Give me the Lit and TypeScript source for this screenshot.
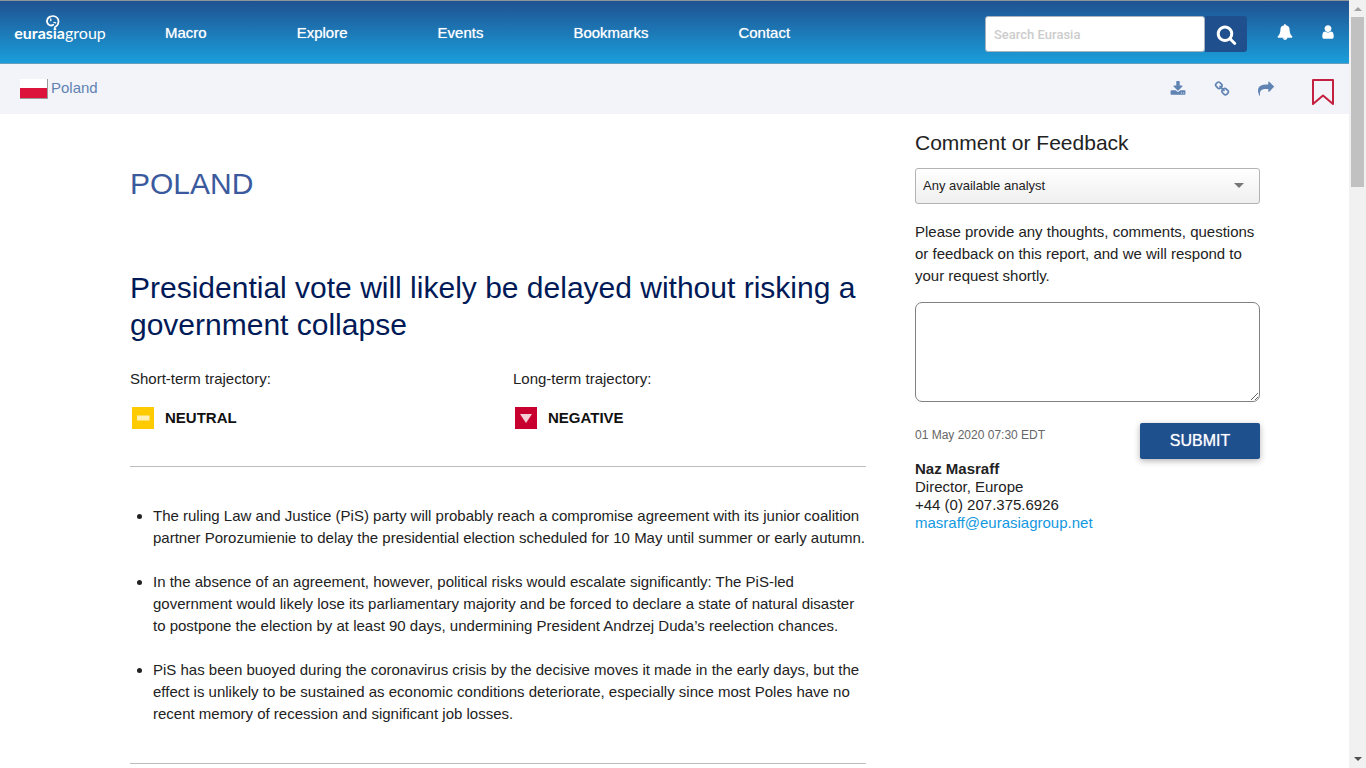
import { LitElement, html, css, svg } from "lit";
import { customElement } from "lit/decorators.js";

const ICONS = {
  search:
    "M1216 832q0-185-131.5-316.5t-316.5-131.5-316.5 131.5-131.5 316.5 131.5 316.5 316.5 131.5 316.5-131.5 131.5-316.5zm512 832q0 52-38 90t-90 38q-54 0-90-38l-343-342q-179 124-399 124-143 0-273.5-55.5t-225-150-150-225-55.5-273.5 55.5-273.5 150-225 225-150 273.5-55.5 273.5 55.5 225 150 150 225 55.5 273.5q0 220-124 399l343 343q37 37 37 90z",
  bell:
    "M912 1696q0-16-16-16-59 0-101.5-42.5t-42.5-101.5q0-16-16-16t-16 16q0 73 51.5 124.5t124.5 51.5q16 0 16-16zm816-288q0 52-38 90t-90 38h-448q0 106-75 181t-181 75-181-75-75-181h-448q-52 0-90-38t-38-90q50-42 91-88t85-119.5 74.5-158.5 50-206 19.5-260q0-152 117-282.5t307-158.5q-8-19-8-39 0-40 28-68t68-28 68 28 28 68q0 20-8 39 190 28 307 158.5t117 282.5q0 139 19.5 260t50 206 74.5 158.5 85 119.5 91 88z",
  user:
    "M1536 1399q0 109-62.5 187t-150.5 78h-854q-88 0-150.5-78t-62.5-187q0-85 8.5-160.5t31.5-152 58.5-131 94-89 134.5-34.5q131 128 313 128t313-128q76 0 134.5 34.5t94 89 58.5 131 31.5 152 8.5 160.5zm-256-887q0 159-112.5 271.5t-271.5 112.5-271.5-112.5-112.5-271.5 112.5-271.5 271.5-112.5 271.5 112.5 112.5 271.5z",
  download:
    "M1344 1344q0-26-19-45t-45-19-45 19-19 45 19 45 45 19 45-19 19-45zm256 0q0-26-19-45t-45-19-45 19-19 45 19 45 45 19 45-19 19-45zm128-224v320q0 40-28 68t-68 28h-1472q-40 0-68-28t-28-68v-320q0-40 28-68t68-28h465l135 136q58 56 136 56t136-56l136-136h464q40 0 68 28t28 68zm-325-569q17 41-14 70l-448 448q-18 19-45 19t-45-19l-448-448q-31-29-14-70 17-39 59-39h256v-448q0-26 19-45t45-19h256q26 0 45 19t19 45v448h256q42 0 59 39z",
  link:
    "M1520 1216q0-40-28-68l-208-208q-28-28-68-28-42 0-72 32 3 3 19 18.5t21.5 21.5 15 19 13 25.5 3.5 27.5q0 40-28 68t-68 28q-15 0-27.5-3.5t-25.5-13-19-15-21.5-21.5-18.5-19q-33 31-33 73 0 40 28 68l206 207q27 27 68 27 40 0 68-26l147-146q28-28 28-67zm-703-705q0-40-28-68l-206-207q-28-28-68-28-39 0-68 27l-147 146q-28 28-28 67 0 40 28 68l208 208q27 27 68 27 42 0 72-31-3-3-19-18.5t-21.5-21.5-15-19-13-25.5-3.5-27.5q0-40 28-68t68-28q15 0 27.5 3.5t25.5 13 19 15 21.5 21.5 18.5 19q33-31 33-73zm895 705q0 120-85 203l-147 146q-83 83-203 83-121 0-204-85l-206-207q-83-83-83-203 0-123 88-209l-88-88q-86 88-208 88-120 0-204-84l-208-208q-84-84-84-204t85-203l147-146q83-83 203-83 121 0 204 85l206 207q83 83 83 203 0 123-88 209l88 88q86-88 208-88 120 0 204 84l208 208q84 84 84 204z",
  share:
    "M1792 640q0 26-19 45l-512 512q-19 19-45 19t-45-19-19-45v-256h-224q-98 0-175.5 6t-154 21.5-133 42.5-105.5 69.5-80 101-48.5 138.5-17.5 181q0 55 5 123 0 6 2.5 23.5t2.5 26.5q0 15-8.5 25t-23.5 10q-16 0-28-17-7-9-13-22t-13.5-30-10.5-24q-127-285-127-451 0-199 53-333 162-403 875-403h224v-256q0-26 19-45t45-19 45 19l512 512q19 19 19 45z",
};

const icon = (name: keyof typeof ICONS, size: number) => html`
  <svg width=${size} height=${size} viewBox="0 0 1792 1792" fill="currentColor" aria-hidden="true">
    ${svg`<path d=${ICONS[name]}></path>`}
  </svg>
`;

const NAV = ["Macro", "Explore", "Events", "Bookmarks", "Contact"];

const POINTS = [
  "The ruling Law and Justice (PiS) party will probably reach a compromise agreement with its junior coalition partner Porozumienie to delay the presidential election scheduled for 10 May until summer or early autumn.",
  "In the absence of an agreement, however, political risks would escalate significantly: The PiS-led government would likely lose its parliamentary majority and be forced to declare a state of natural disaster to postpone the election by at least 90 days, undermining President Andrzej Duda’s reelection chances.",
  "PiS has been buoyed during the coronavirus crisis by the decisive moves it made in the early days, but the effect is unlikely to be sustained as economic conditions deteriorate, especially since most Poles have no recent memory of recession and significant job losses.",
];

const base = css`
  *,
  *::before,
  *::after {
    box-sizing: border-box;
  }
  svg {
    display: block;
  }
  a {
    color: inherit;
    text-decoration: none;
  }
  button {
    padding: 0;
    border: 0;
    background: none;
    color: inherit;
    font: inherit;
    cursor: pointer;
  }
`;

@customElement("site-header")
export class SiteHeader extends LitElement {
  static styles = [
    base,
    css`
      :host {
        display: flex;
        align-items: center;
        height: 64px;
        padding: 0 13px 0 15px;
        border-top: 1px solid #8d959d;
        border-bottom: 1px solid #6b9cb9;
        background: linear-gradient(#205291, #1a9edb);
        color: #fff;
      }
      .logo {
        display: flex;
        flex-direction: column;
        align-items: center;
        width: 90px;
        margin-bottom: 8px;
        font: 16px/18px Lato, sans-serif;
      }
      .logo svg {
        margin: 0 14px -5px 0;
      }
      .logo b {
        font-weight: 700;
      }
      nav {
        display: flex;
        flex: 1;
        gap: 90px;
        margin: 2px 0 0 60px;
        font-size: 15px;
        line-height: 20px;
        text-shadow: 0 0 1px rgba(255, 255, 255, 0.7);
      }
      form {
        display: flex;
        margin: 4px 30px 0 0;
      }
      input {
        width: 220px;
        height: 36px;
        padding: 0 8px;
        border: 1px solid #a9b3bd;
        border-radius: 3px;
        background: #fff;
        font: 500 13px Roboto, sans-serif;
      }
      input::placeholder {
        color: #ccc;
        opacity: 1;
      }
      .go {
        display: grid;
        place-items: center;
        width: 42px;
        height: 36px;
        border-radius: 0 3px 3px 0;
        background: #1f4f8c;
      }
      .actions {
        display: flex;
        gap: 27px;
      }
    `,
  ];

  render() {
    return html`
      <a class="logo" href="#" aria-label="Eurasia Group home">
        <svg width="14" height="14" viewBox="0 0 14 14" fill="none" stroke="#fff" stroke-linecap="round" aria-hidden="true">
          <path d="M3.600 1.800C.6 3.400.2 7.600 2.400 9.400c1.400 1.200 3.400 1.300 4.800.4" stroke-width="1.900"></path>
          <path d="M4.600 1.500c3.600-1.500 8 .8 7.900 5-.1 2.600-1.500 4.600-3.700 5.700" stroke-width="1.700"></path>
          <path d="M4.800 3.800v2M8 7.400l1.600.4" stroke-width="1.300"></path>
        </svg>
        <span><b>eurasia</b>group</span>
      </a>
      <nav>${NAV.map((n) => html`<a href="#">${n}</a>`)}</nav>
      <form @submit=${(e: Event) => e.preventDefault()}>
        <input type="text" placeholder="Search Eurasia" aria-label="Search Eurasia" />
        <button class="go" aria-label="Search">${icon("search", 21)}</button>
      </form>
      <div class="actions">
        <button aria-label="Notifications">${icon("bell", 16)}</button>
        <button aria-label="Account">${icon("user", 16)}</button>
      </div>
    `;
  }
}

@customElement("country-bar")
export class CountryBar extends LitElement {
  static styles = [
    base,
    css`
      :host {
        display: flex;
        align-items: center;
        justify-content: space-between;
        height: 50px;
        padding: 0 15px 0 20px;
        background: #f3f4f9;
        color: #5f83b3;
      }
      .country {
        display: flex;
        gap: 3px;
        font-size: 15px;
        line-height: 18px;
      }
      .flag {
        width: 28px;
        height: 20px;
        border: solid #9a9a9a;
        border-width: 0 1px 1px 0;
        background: linear-gradient(#fff 50%, #dc143c 50%);
      }
      .tools {
        display: flex;
        align-items: center;
        gap: 28px;
      }
      .mark {
        margin: 6px 0 0 10px;
      }
    `,
  ];

  render() {
    return html`
      <a class="country" href="#"><span class="flag"></span>Poland</a>
      <div class="tools">
        <button aria-label="Download">${icon("download", 16)}</button>
        <button aria-label="Copy link">${icon("link", 16)}</button>
        <button aria-label="Share">${icon("share", 16)}</button>
        <button class="mark" aria-label="Bookmark">
          <svg width="22" height="26" viewBox="0 0 22 26" fill="none" stroke="#c4203f" stroke-width="2" stroke-linejoin="round">
            <path d="M1 1h20v24L11 16.500 1 25z"></path>
          </svg>
        </button>
      </div>
    `;
  }
}

@customElement("report-article")
export class ReportArticle extends LitElement {
  static styles = [
    base,
    css`
      :host {
        display: block;
        padding-top: 51px;
      }
      h1,
      h2 {
        margin: 0;
        font-size: 30px;
        font-weight: 400;
        line-height: 37px;
      }
      h2 {
        color: #3b5a9d;
      }
      h1 {
        margin-top: 67px;
        color: #001a57;
      }
      .trajectories {
        display: grid;
        grid-template-columns: 1fr 1fr;
        gap: 30px;
        margin-top: 25px;
        line-height: 22px;
      }
      .verdict {
        display: flex;
        align-items: center;
        gap: 11px;
        margin-top: 17px;
        padding-left: 2px;
        color: #111;
        font-weight: 700;
      }
      hr {
        height: 1px;
        margin: 37px 0 0;
        border: 0;
        background: #bcbcbc;
      }
      ul {
        display: grid;
        gap: 22px;
        margin: 38px 0 0;
        padding: 0 0 0 23px;
        line-height: 22px;
      }
      .end {
        margin-top: 38px;
      }
    `,
  ];

  render() {
    return html`
      <h2>POLAND</h2>
      <h1>Presidential vote will likely be delayed without risking a government collapse</h1>
      <div class="trajectories">
        <div>
          Short-term trajectory:
          <div class="verdict">
            <svg width="22" height="22" viewBox="0 0 22 22" aria-hidden="true">
              <path fill="#fecb00" d="M0 0h22v22H0z"></path>
              <path fill="#fff0b8" d="M5 8.500h12.500v5H5z"></path>
            </svg>
            NEUTRAL
          </div>
        </div>
        <div>
          Long-term trajectory:
          <div class="verdict">
            <svg width="22" height="22" viewBox="0 0 22 22" aria-hidden="true">
              <path fill="#c8002f" d="M0 0h22v22H0z"></path>
              <path fill="#f4cdd6" d="M5 7h12l-6 9z"></path>
            </svg>
            NEGATIVE
          </div>
        </div>
      </div>
      <hr />
      <ul>
        ${POINTS.map((p) => html`<li>${p}</li>`)}
      </ul>
      <hr class="end" />
    `;
  }
}

@customElement("feedback-panel")
export class FeedbackPanel extends LitElement {
  static styles = [
    base,
    css`
      :host {
        display: block;
        padding-top: 16px;
      }
      h3 {
        margin: 0 0 12px;
        font-size: 21px;
        font-weight: 400;
        line-height: 26px;
      }
      .pick {
        position: relative;
        display: block;
      }
      select {
        display: block;
        width: 100%;
        height: 36px;
        padding: 0 8px 2px 7px;
        border: 1px solid #b3b3b3;
        border-radius: 3px;
        appearance: none;
        background: linear-gradient(#fff, #efefef);
        color: #222;
        font: 13px "Liberation Sans", Arial, sans-serif;
      }
      .arrow {
        position: absolute;
        top: 15px;
        right: 16px;
        border: solid transparent;
        border-width: 5px 5px 0;
        border-top-color: #777;
      }
      .prompt {
        display: block;
        margin-top: 17px;
        line-height: 22px;
      }
      textarea {
        display: block;
        width: 100%;
        height: 100px;
        margin-top: 15px;
        border: 1px solid #808080;
        border-radius: 7px;
        background: #fff;
        font: inherit;
      }
      .row {
        display: flex;
        justify-content: space-between;
        margin-top: 21px;
      }
      time {
        display: block;
        margin: 4px 0 17px;
        color: #666;
        font-size: 12px;
        line-height: 16px;
      }
      address {
        font-style: normal;
        line-height: 18px;
      }
      .mail {
        color: #1298e0;
      }
      .submit {
        width: 120px;
        height: 36px;
        border-radius: 2px;
        background: #1f508e;
        box-shadow: 0 2px 6px rgba(0, 0, 0, 0.3);
        color: #fff;
        font-size: 16px;
        text-shadow: 0 0 1px rgba(255, 255, 255, 0.7);
      }
    `,
  ];

  render() {
    return html`
      <h3>Comment or Feedback</h3>
      <div class="pick">
        <select aria-label="Analyst">
          <option>Any available analyst</option>
        </select>
        <span class="arrow"></span>
      </div>
      <label class="prompt" for="comment">
        Please provide any thoughts, comments, questions or feedback on this report, and we will respond to your
        request shortly.
      </label>
      <textarea id="comment"></textarea>
      <div class="row">
        <div>
          <time datetime="2020-05-01T07:30-04:00">01 May 2020 07:30 EDT</time>
          <address>
            <b>Naz Masraff</b><br />
            Director, Europe<br />
            +44 (0) 207.375.6926<br />
            <a class="mail" href="mailto:masraff@eurasiagroup.net">masraff@eurasiagroup.net</a>
          </address>
        </div>
        <button class="submit">SUBMIT</button>
      </div>
    `;
  }
}

@customElement("app-root")
export class AppRoot extends LitElement {
  static styles = [
    base,
    css`
      :host {
        display: grid;
        grid-template-columns: minmax(0, 1fr) 17px;
        height: 100vh;
        overflow: hidden;
        background: #fff;
        color: #222;
        font: 15px/22px "Liberation Sans", Arial, sans-serif;
      }
      .page {
        min-width: 0;
        overflow: hidden;
      }
      .content {
        display: grid;
        grid-template-columns: minmax(0, 1fr) 345px;
        gap: 49px;
        padding: 0 89px 0 130px;
      }
      .scroll {
        display: flex;
        flex-direction: column;
        align-items: center;
        justify-content: space-between;
        padding: 7px 0;
        background: #f1f1f1;
      }
      .up,
      .down {
        border: solid transparent;
      }
      .up {
        border-width: 0 4px 4px;
        border-bottom-color: #a3a3a3;
      }
      .down {
        border-width: 4px 4px 0;
        border-top-color: #505050;
      }
      .thumb {
        width: 13px;
        height: 170px;
        margin: 6px 0 auto;
        background: #c1c1c1;
      }
    `,
  ];

  render() {
    return html`
      <div class="page">
        <site-header></site-header>
        <country-bar></country-bar>
        <main class="content">
          <report-article></report-article>
          <feedback-panel></feedback-panel>
        </main>
      </div>
      <div class="scroll" aria-hidden="true">
        <span class="up"></span>
        <span class="thumb"></span>
        <span class="down"></span>
      </div>
    `;
  }
}
